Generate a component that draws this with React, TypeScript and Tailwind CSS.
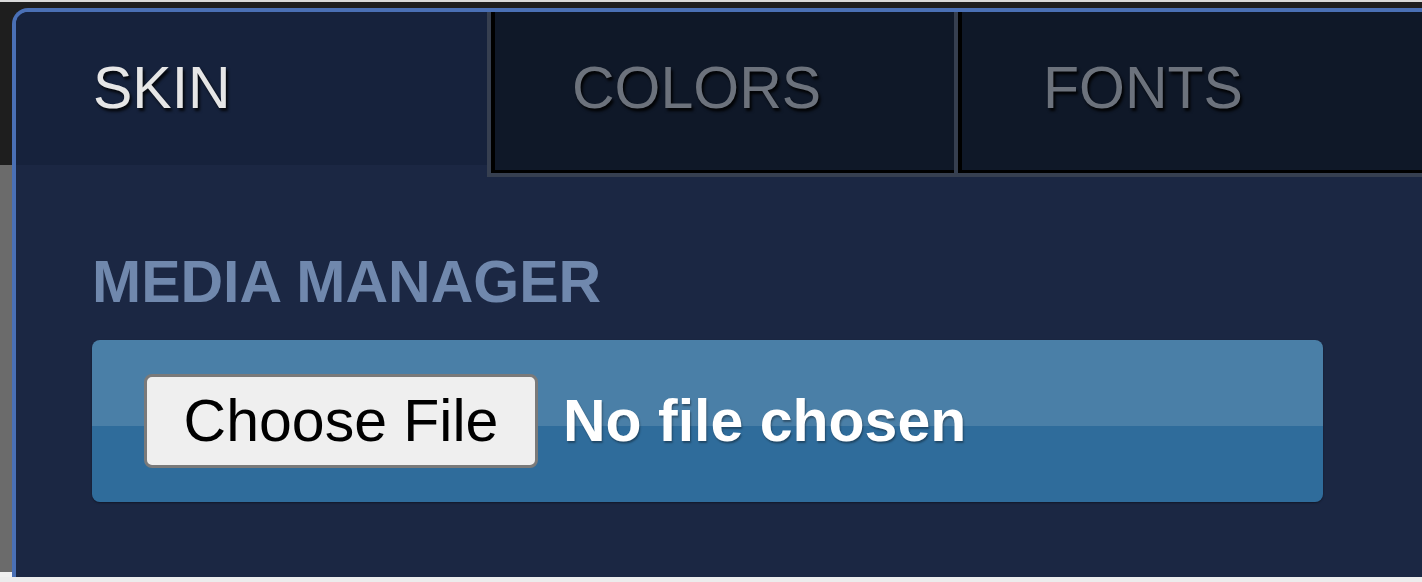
import React from "react";

export default function App() {
  return (
    <div
      className="w-[1422px] h-[582px] flex flex-col bg-[#eeeeee] overflow-hidden"
      style={{ fontFamily: '"Liberation Sans", Arial, sans-serif' }}
    >
      <div className="h-[2px] bg-[#d9d9d9]" />
      <div className="flex h-[575px]">
        <div className="w-[12px] flex flex-col">
          <div className="h-[163px] bg-[#1e1e1e]" />
          <div className="h-[407px] bg-[#6b6b6b]" />
          <div className="flex-1 bg-[#efefef]" />
        </div>
        <div className="flex-1 flex flex-col bg-[#1e1e1e]">
          <div className="h-[6px]" />
          <div className="flex-1 flex flex-col rounded-tl-[16px] border-l-4 border-t-4 border-[#4a70b5] bg-[#1b2743] overflow-hidden">
            {/* Tabs */}
            <div className="flex items-start h-[165px]">
              <div className="w-[475px] h-[153px] bg-[#16223c] pl-[77px] pt-[47px]">
                <span className="block text-[59px] leading-none text-[#e6e6e6] [text-shadow:2px_3px_3px_rgba(0,0,0,0.8)]">
                  SKIN
                </span>
              </div>
              <div className="w-[467px] h-[161px] bg-[#0f1828] border-l-4 border-b-[3px] border-black shadow-[-4px_0_0_#363f50,0_4px_0_#363f50,-4px_4px_0_#363f50] pl-[77px] pt-[47px]">
                <span className="block text-[59px] leading-none text-[#6c727c] [text-shadow:2px_3px_3px_rgba(0,0,0,0.9)]">
                  COLORS
                </span>
              </div>
              <div className="flex-1 h-[161px] bg-[#0f1828] border-l-4 border-b-[3px] border-black shadow-[-4px_0_0_#363f50,0_4px_0_#363f50,-4px_4px_0_#363f50] pl-[81px] pt-[47px]">
                <span className="block text-[59px] leading-none text-[#6c727c] [text-shadow:2px_3px_3px_rgba(0,0,0,0.9)]">
                  FONTS
                </span>
              </div>
            </div>
            {/* Content */}
            <div className="pl-[76px] pt-[76px] flex flex-col">
              <h2 className="text-[59px] leading-none font-bold text-[#7088ad]">
                MEDIA MANAGER
              </h2>
              <div className="mt-[28px] w-[1231px] h-[162px] rounded-[8px] bg-[linear-gradient(to_bottom,#4a7fa7_0%,#4a7fa7_53%,#2f6c9b_53%,#2f6c9b_100%)] flex items-center pl-[52px] gap-[25px] shadow-[0_1px_2px_rgba(0,0,0,0.4)]">
                <button className="h-[94px] w-[394px] rounded-[8px] border-[3px] border-[#7a7a7a] bg-[#efefef] text-[59px] leading-none text-black flex items-center justify-center">
                  Choose File
                </button>
                <span className="text-[59px] leading-none font-bold text-white [text-shadow:1px_2px_2px_rgba(0,0,0,0.35)]">
                  No file chosen
                </span>
              </div>
            </div>
          </div>
        </div>
      </div>
      <div className="h-[5px] bg-[#ececec]" />
    </div>
  );
}
